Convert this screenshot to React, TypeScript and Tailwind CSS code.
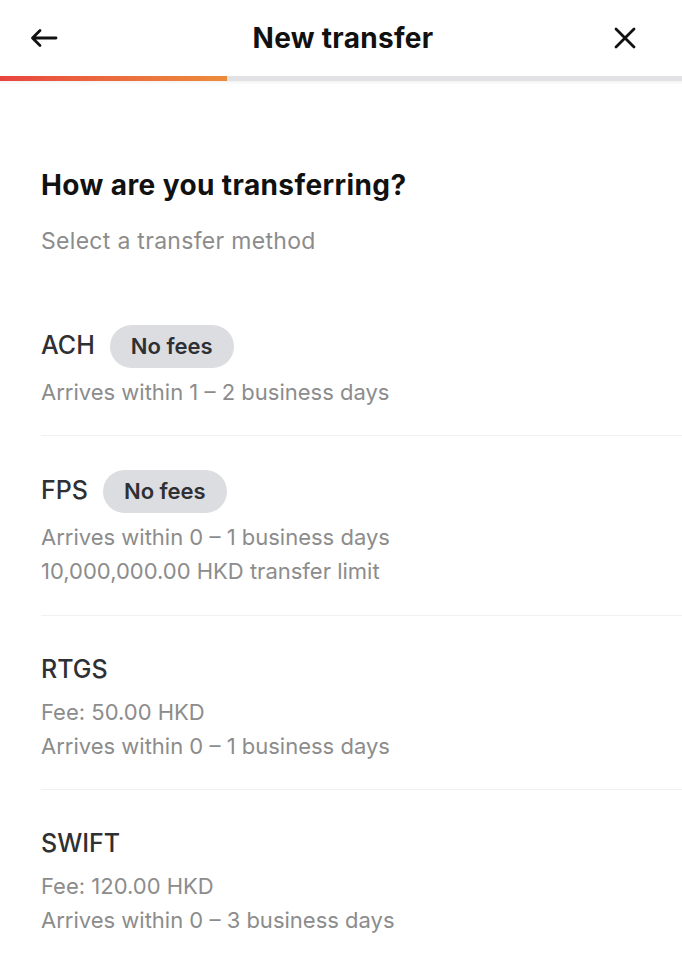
import React from "react";

const font = { fontFamily: '"Inter", "Noto Sans", sans-serif' };

function Badge() {
  return (
    <span className="ml-[15px] inline-flex h-[43px] items-center rounded-full bg-[#dcdde1] px-[21px] text-[22px] font-semibold text-[#2e3033]">
      No fees
    </span>
  );
}

type Item = { name: string; badge?: boolean; lines: string[] };

const items: Item[] = [
  { name: "ACH", badge: true, lines: ["Arrives within 1 – 2 business days"] },
  {
    name: "FPS",
    badge: true,
    lines: ["Arrives within 0 – 1 business days", "10,000,000.00 HKD transfer limit"],
  },
  { name: "RTGS", lines: ["Fee: 50.00 HKD", "Arrives within 0 – 1 business days"] },
  { name: "SWIFT", lines: ["Fee: 120.00 HKD", "Arrives within 0 – 3 business days"] },
];

export default function App() {
  return (
    <div className="min-h-[960px] w-[682px] bg-white" style={font}>
      <div className="flex h-[76px] items-center justify-between pl-[30px] pr-[46px]">
        <svg width="28" height="20" viewBox="0 0 28 20" fill="none" stroke="#111" strokeWidth="2.8" strokeLinecap="round" strokeLinejoin="round">
          <path d="M26 10H3M10 2.5L2.5 10L10 17.5" />
        </svg>
        <div className="ml-[14px] text-[28px] font-bold tracking-[0.3px] text-[#111]">New transfer</div>
        <svg width="22" height="22" viewBox="0 0 22 22" fill="none" stroke="#111" strokeWidth="2.8" strokeLinecap="round">
          <path d="M2 2L20 20M20 2L2 20" />
        </svg>
      </div>
      <div className="flex h-[5px] bg-[#e2e2e6]">
        <div className="h-full w-[227px] bg-gradient-to-r from-[#e8443f] to-[#ec8c3a]" />
      </div>
      <div className="h-[4px] bg-gradient-to-b from-[#f3f3f3] to-white" />
      <div className="pl-[41px] pt-[83px]">
        <h1 className="text-[28px] font-bold leading-[34px] tracking-[0.4px] text-[#111]">How are you transferring?</h1>
        <p className="mt-[24px] text-[23px] leading-[30px] tracking-[0.3px] text-[#8c8c8c]">Select a transfer method</p>
        <div className="mt-[68px]">
          {items.map((it, i) => (
            <div key={it.name} className={i > 0 ? "border-t border-[#f1f1f1]" : ""}>
              <div className={i === 0 ? "pb-[26px]" : it.badge ? "pt-[33px] pb-[27px]" : "pt-[32px] pb-[26px]"}>
                <div className="flex h-[44px] items-center">
                  <span className="text-[25px] font-medium text-[#2e3033]">{it.name}</span>
                  {it.badge && <Badge />}
                </div>
                <div className={it.badge ? "mt-[7px]" : "mt-[3px]"}>
                  {it.lines.map((l) => (
                    <div key={l} className="text-[22px] leading-[34px] text-[#8c8c8c]">
                      {l}
                    </div>
                  ))}
                </div>
              </div>
            </div>
          ))}
        </div>
      </div>
    </div>
  );
}
